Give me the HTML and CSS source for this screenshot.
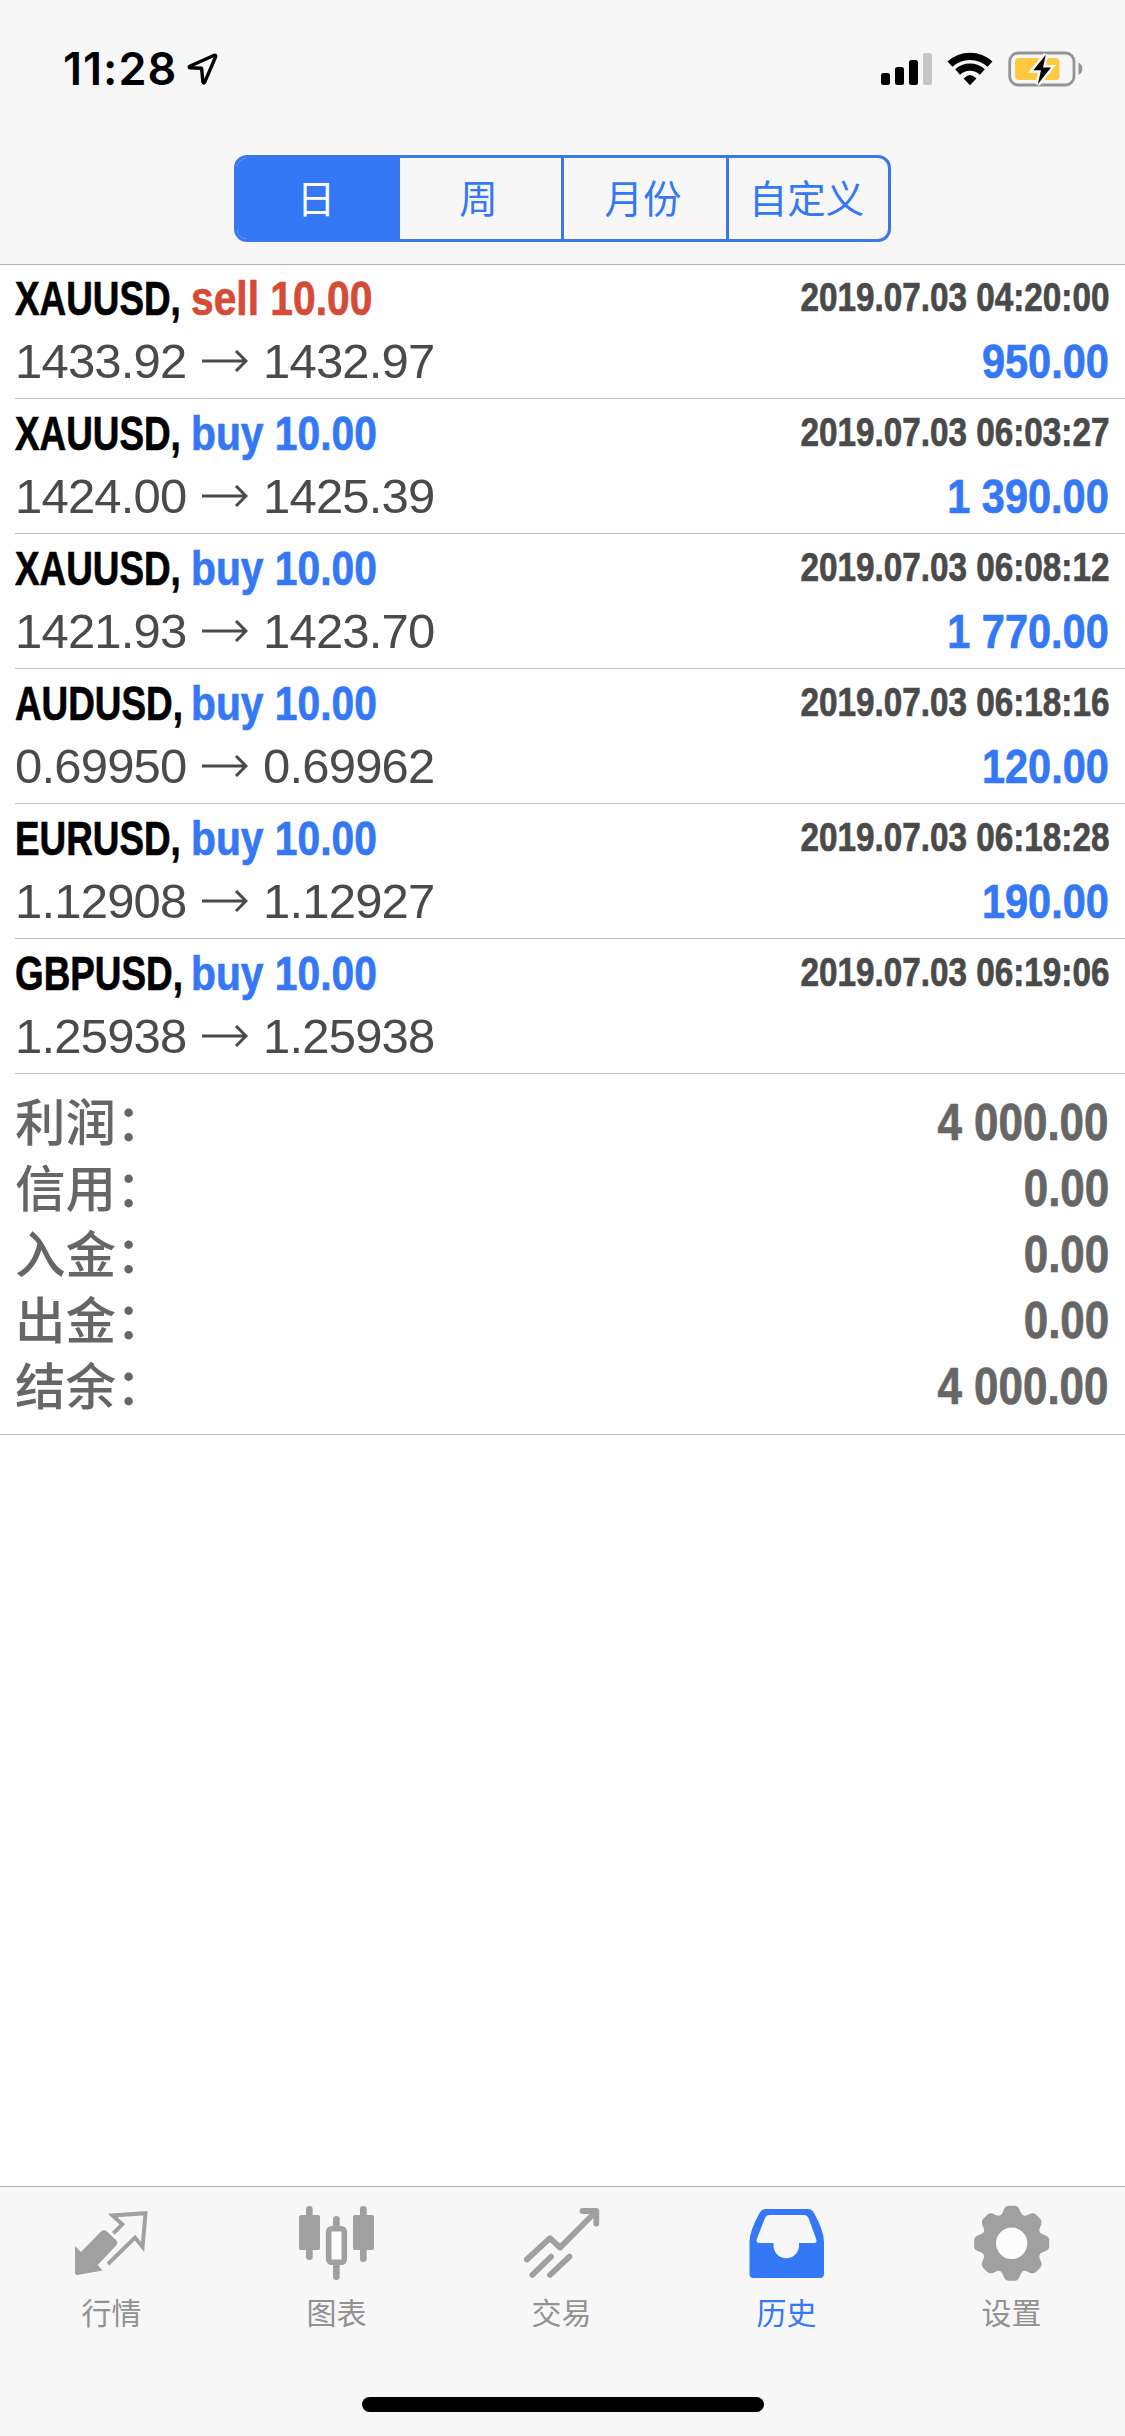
FILE: index.html
```html
<!DOCTYPE html>
<html lang="zh-CN">
<head>
<meta charset="utf-8">
<title>历史</title>
<link rel="stylesheet" href="styles.css">
</head>
<body>
<div class="app">
  <header class="header">
    <div class="status">
      <div class="clock">
        <span class="time">11:28</span>
        <svg class="location" width="31" height="32" viewBox="0 0 31 32"><path d="M27.3 2.2 2.7 13.3Q1.6 14.3 3 14.8L14.6 15.3 15.9 29Q16.6 30.8 17.7 29.2L28.7 3.6Q28.8 1.7 27.3 2.2Z" fill="none" stroke="#000" stroke-width="3.4" stroke-linejoin="round"/></svg>
      </div>
      <div class="indicators">
        <svg width="51" height="34" viewBox="882 52 51 34"><rect x="882" y="73" width="9" height="12" rx="2.5"/><rect x="896" y="67" width="9" height="18" rx="2.5"/><rect x="910" y="60" width="9" height="25" rx="2.5"/><rect x="924" y="53" width="9" height="32" rx="2.5" fill="#c6c6c6"/></svg>
        <svg width="46" height="34" viewBox="948 52 46 34"><path d="M951 64.2A29.3 29.3 0 0 1 991 64.2M958.6 72A18.3 18.3 0 0 1 983.4 72" fill="none" stroke="#000" stroke-width="7.2"/><path d="M971 85.3 964.6 78.6Q971 71.6 977.4 78.6Z"/></svg>
        <svg width="76" height="36" viewBox="1008 51 76 36"><rect x="1009.7" y="53" width="64.3" height="32" rx="8.5" fill="none" stroke="#949496" stroke-width="2.8"/><path d="M1078.5 62.5Q1082.3 64.5 1082.3 68.7T1078.5 75Z" fill="#949496"/><rect x="1015" y="58" width="44.5" height="22" rx="4" fill="#fdc93f"/><path d="M1045.8 54.8 1033.3 70.3H1041L1037.8 84.3 1051 67.4H1043Z" fill="#000" stroke="#f7f7f7" stroke-width="5" paint-order="stroke"/></svg>
      </div>
    </div>
    <nav class="segments">
      <span class="segment selected">日</span>
      <span class="segment">周</span>
      <span class="segment">月份</span>
      <span class="segment">自定义</span>
    </nav>
  </header>

  <main class="history">
    <section class="deals">
      <article class="deal">
        <div class="line"><span class="symbol">XAUUSD,</span><span class="side sell">sell 10.00</span><time class="stamp">2019.07.03 04:20:00</time></div>
        <div class="line prices"><span class="price">1433.92</span><svg class="arrow" viewBox="0 0 46 22"><path d="M0 11H44M34 1 44 11 34 21"/></svg><span class="price">1432.97</span><span class="profit">950.00</span></div>
      </article>
      <article class="deal">
        <div class="line"><span class="symbol">XAUUSD,</span><span class="side">buy 10.00</span><time class="stamp">2019.07.03 06:03:27</time></div>
        <div class="line prices"><span class="price">1424.00</span><svg class="arrow" viewBox="0 0 46 22"><path d="M0 11H44M34 1 44 11 34 21"/></svg><span class="price">1425.39</span><span class="profit">1 390.00</span></div>
      </article>
      <article class="deal">
        <div class="line"><span class="symbol">XAUUSD,</span><span class="side">buy 10.00</span><time class="stamp">2019.07.03 06:08:12</time></div>
        <div class="line prices"><span class="price">1421.93</span><svg class="arrow" viewBox="0 0 46 22"><path d="M0 11H44M34 1 44 11 34 21"/></svg><span class="price">1423.70</span><span class="profit">1 770.00</span></div>
      </article>
      <article class="deal">
        <div class="line"><span class="symbol">AUDUSD,</span><span class="side">buy 10.00</span><time class="stamp">2019.07.03 06:18:16</time></div>
        <div class="line prices"><span class="price">0.69950</span><svg class="arrow" viewBox="0 0 46 22"><path d="M0 11H44M34 1 44 11 34 21"/></svg><span class="price">0.69962</span><span class="profit">120.00</span></div>
      </article>
      <article class="deal">
        <div class="line"><span class="symbol">EURUSD,</span><span class="side">buy 10.00</span><time class="stamp">2019.07.03 06:18:28</time></div>
        <div class="line prices"><span class="price">1.12908</span><svg class="arrow" viewBox="0 0 46 22"><path d="M0 11H44M34 1 44 11 34 21"/></svg><span class="price">1.12927</span><span class="profit">190.00</span></div>
      </article>
      <article class="deal">
        <div class="line"><span class="symbol">GBPUSD,</span><span class="side">buy 10.00</span><time class="stamp">2019.07.03 06:19:06</time></div>
        <div class="line prices"><span class="price">1.25938</span><svg class="arrow" viewBox="0 0 46 22"><path d="M0 11H44M34 1 44 11 34 21"/></svg><span class="price">1.25938</span></div>
      </article>
    </section>
    <dl class="totals">
      <div class="total"><dt>利润：</dt><dd>4 000.00</dd></div>
      <div class="total"><dt>信用：</dt><dd>0.00</dd></div>
      <div class="total"><dt>入金：</dt><dd>0.00</dd></div>
      <div class="total"><dt>出金：</dt><dd>0.00</dd></div>
      <div class="total"><dt>结余：</dt><dd>4 000.00</dd></div>
    </dl>
  </main>

  <footer class="footer">
    <nav class="tabs">
      <div class="tab">
        <svg class="icon" viewBox="0 0 77 76"><path d="M1 41 7 47 27 26.5Q30 24 33 26.5L42.5 35.5Q44.3 37.8 42.5 40L23.7 60 28.5 65.5 3.5 70Q1 70 1 67.5Z" fill="currentColor"/><path d="M39.3 28.3 48.3 19.3 38.5 10.5 71.5 8.2 68.6 42 61 32.6 34 59" fill="none" stroke="currentColor" stroke-width="3.9"/></svg>
        <span>行情</span>
      </div>
      <div class="tab">
        <svg class="icon" viewBox="0 0 77 76" fill="currentColor"><rect x="0" y="10" width="21" height="35" rx="2"/><rect x="7" y="1" width="6.7" height="54" rx="3.3"/><rect x="54" y="10" width="21" height="35" rx="2"/><rect x="61" y="1" width="6.7" height="56" rx="3.3"/><rect x="34" y="11" width="6.7" height="15" rx="3.3"/><rect x="34" y="56" width="6.7" height="19" rx="3.3"/><rect x="29.7" y="23.7" width="15.6" height="33.6" rx="3" fill="#fcfcfc" stroke="currentColor" stroke-width="5.6"/></svg>
        <span>图表</span>
      </div>
      <div class="tab">
        <svg class="icon" viewBox="0 0 77 76" fill="none" stroke="currentColor" stroke-width="5.8" stroke-linecap="round" stroke-linejoin="round"><path d="M2.9 54.5 26 33.2 36 42.6 72 6.500M58.500 6H72.300V18.500M8.300 70 27 51.700M26 70 45.500 51.700"/></svg>
        <span>交易</span>
      </div>
      <div class="tab active">
        <svg class="icon" viewBox="0 0 77 76"><path fill="currentColor" fill-rule="evenodd" d="M17 4H58.5Q63 4 65 8 75 26 75 37V69Q75 73 71 73H4.500Q.5 73 .5 69V37Q.5 26 10.500 8 12.500 4 17 4ZM20.500 10Q17.500 10 16 13L8 33.500Q6.500 38 10 38H24.500V40.500A12.700 12.700 0 0 0 50 40.500V38H65.500Q68.500 38 67 33.500L59.500 13Q58 10 55 10Z"/></svg>
        <span>历史</span>
      </div>
      <div class="tab">
        <svg class="icon" viewBox="0 0 77 76" fill="currentColor"><defs><path id="tooth" d="M-12.5 -27Q-9.500 -28.500 -8.500 -32L-7.500 -34.500Q-6 -37.500 -3 -37.500H3Q6 -37.500 7.500 -34.500L8.500 -32Q9.500 -28.500 12.500 -27Z"/></defs><g transform="translate(37.7 38.3)"><circle r="22.600" fill="#fcfcfc" stroke="currentColor" stroke-width="13.800"/><use href="#tooth"/><use href="#tooth" transform="rotate(45)"/><use href="#tooth" transform="rotate(90)"/><use href="#tooth" transform="rotate(135)"/><use href="#tooth" transform="rotate(180)"/><use href="#tooth" transform="rotate(225)"/><use href="#tooth" transform="rotate(270)"/><use href="#tooth" transform="rotate(315)"/></g></svg>
        <span>设置</span>
      </div>
    </nav>
    <div class="home-bar"></div>
  </footer>
</div>
</body>
</html>
```
FILE: styles.css
```css
* {
  box-sizing: border-box;
}

body {
  margin: 0;
  background: #fefefe;
  font-family: "Liberation Sans", "Noto Sans CJK SC", sans-serif;
}

svg {
  display: block;
  flex: none;
}

.app {
  display: flex;
  flex-direction: column;
  width: 1125px;
  height: 2436px;
}

/* Status bar and period switch */
.header {
  display: flex;
  flex-direction: column;
  align-items: center;
  height: 265px;
  background: #f7f7f7;
  border-bottom: 1px solid #b0b0b0;
}

.status {
  display: flex;
  justify-content: space-between;
  width: 100%;
  height: 155px;
  padding: 51px 41px 0 63px;
}

.clock {
  display: flex;
}

.time {
  width: 124px;
  font: 600 45px/36px Inter, sans-serif;
  letter-spacing: 1px;
}

.location {
  margin-top: 2px;
}

.indicators {
  display: flex;
  gap: 15px;
  height: 36px;
  align-items: center;
}

.segments {
  display: grid;
  grid-template-columns: 160px 164px 165px 1fr;
  width: 657px;
  height: 87px;
  overflow: hidden;
  border: 3px solid #3b78e7;
  border-radius: 13px;
  color: #3478f6;
  font: 400 38.500px/76px "Noto Sans CJK SC", sans-serif;
  text-align: center;
}

.segment {
  padding-right: 2px;
}

.segment + .segment {
  padding-right: 4px;
  border-left: 3px solid #3b78e7;
}

.segment.selected {
  background: #3478f6;
  color: #fff;
}

/* Closed deals */
.history {
  flex: 1;
}

.deals {
  padding-left: 15px;
}

.deal {
  height: 135px;
  padding-top: 1px;
  border-bottom: 1px solid #c2c2c2;
}

.deal:first-child {
  height: 134px;
  padding-top: 0;
}

.line {
  display: flex;
  height: 66px;
  padding-right: 16px;
  font-size: 49px;
  line-height: 66px;
  white-space: nowrap;
}

.symbol,
.side,
.stamp,
.profit,
.total dd {
  font-weight: 700;
  -webkit-text-stroke: 0.7px currentColor;
}

.symbol {
  width: 176px;
  color: #000;
  transform: scaleX(0.752);
  transform-origin: left;
}

.side {
  color: #3478f6;
  transform: scaleX(0.832);
  transform-origin: left;
}

.side.sell {
  color: #d64a38;
}

.stamp {
  margin-left: auto;
  color: #4a4a4a;
  font-size: 40px;
  line-height: 65px;
  transform: scaleX(0.832);
  transform-origin: right;
}

.prices {
  height: 60px;
  line-height: 60px;
}

.price {
  width: 187px;
  color: #4a4a4a;
  letter-spacing: -0.800px;
}

.arrow {
  width: 46px;
  height: 22px;
  margin: 19px 15px 0 0;
  fill: none;
  stroke: #4a4a4a;
  stroke-width: 3px;
}

.profit {
  margin-left: auto;
  color: #3478f6;
  transform: scaleX(0.847);
  transform-origin: right;
}

/* Account totals */
.totals {
  margin: 0;
  padding: 15px 16px 15px 15px;
  border-bottom: 1px solid #c2c2c2;
}

.total {
  display: flex;
  justify-content: space-between;
  height: 66px;
  color: #666;
}

.total dt {
  padding-top: 2px;
  font-size: 50.500px;
  font-weight: 500;
  line-height: 66px;
}

.total dd {
  margin: 0;
  font-size: 51px;
  line-height: 68px;
  transform: scaleX(0.862);
  transform-origin: right;
}

/* Tab bar */
.footer {
  display: flex;
  flex-direction: column;
  justify-content: space-between;
  align-items: center;
  height: 250px;
  padding: 18px 0 24px;
  background: #f7f7f7;
  border-top: 1px solid #b0b0b0;
}

.tabs {
  display: grid;
  grid-template-columns: repeat(5, 225px);
}

.tab {
  display: flex;
  flex-direction: column;
  align-items: center;
  color: #a0a0a0;
}

.tab span {
  margin-top: 10px;
  padding-right: 2px;
  color: #929292;
  font: 400 30px/40px "Noto Sans CJK SC", sans-serif;
}

.tab.active,
.tab.active span {
  color: #3478f6;
}

.icon {
  width: 77px;
  height: 76px;
}

.home-bar {
  width: 402px;
  height: 15px;
  border-radius: 8px;
  background: #000;
}
```
